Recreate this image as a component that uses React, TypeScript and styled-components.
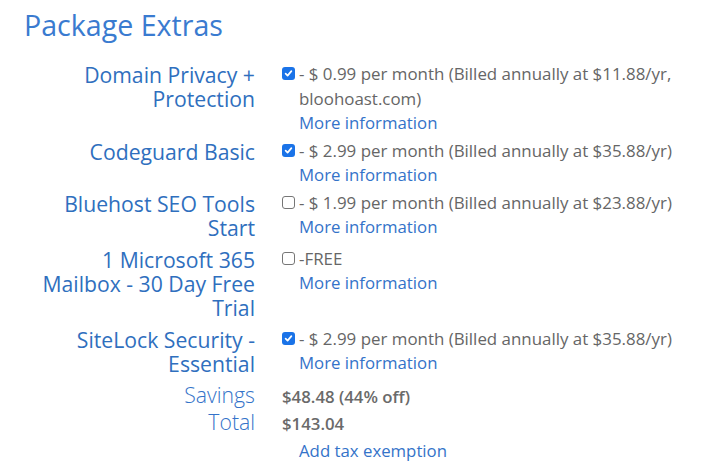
import styled, { createGlobalStyle } from 'styled-components';

const GlobalStyle = createGlobalStyle`
  html, body {
    margin: 0;
    padding: 0;
    background: #ffffff;
  }
  body {
    font-family: 'Open Sans', 'Noto Sans', sans-serif;
  }
`;

type Extra = {
  name: string;
  price: string;
  checked: boolean;
};

const extras: Extra[] = [
  {
    name: 'Domain Privacy + Protection',
    price: '- $ 0.99 per month (Billed annually at $11.88/yr, bloohoast.com)',
    checked: true,
  },
  {
    name: 'Codeguard Basic',
    price: '- $ 2.99 per month (Billed annually at $35.88/yr)',
    checked: true,
  },
  {
    name: 'Bluehost SEO Tools Start',
    price: '- $ 1.99 per month (Billed annually at $23.88/yr)',
    checked: false,
  },
  {
    name: '1 Microsoft 365 Mailbox - 30 Day Free Trial',
    price: '-FREE',
    checked: false,
  },
  {
    name: 'SiteLock Security - Essential',
    price: '- $ 2.99 per month (Billed annually at $35.88/yr)',
    checked: true,
  },
];

const Check = ({ checked }: { checked: boolean }) => (
  <Box $checked={checked}>
    {checked && (
      <svg width="9" height="9" viewBox="0 0 10 10">
        <path
          d="M1.8 5.2 L4 7.4 L8.2 2.4"
          fill="none"
          stroke="#fff"
          strokeWidth="1.9"
          strokeLinecap="round"
          strokeLinejoin="round"
        />
      </svg>
    )}
  </Box>
);

const App = () => {
  return (
    <Page>
      <GlobalStyle />
      <Title>Package Extras</Title>
      <Table>
        {extras.map((item) => (
          <Row key={item.name}>
            <Label>{item.name}</Label>
            <Value>
              <Check checked={item.checked} />
              <Details>
                <Price>{item.price}</Price>
                <Link>More information</Link>
              </Details>
            </Value>
          </Row>
        ))}
        <SummaryRow>
          <SummaryLabel>Savings</SummaryLabel>
          <Amount>$48.48 (44% off)</Amount>
        </SummaryRow>
        <SummaryRow>
          <SummaryLabel>Total</SummaryLabel>
          <Amount>$143.04</Amount>
        </SummaryRow>
        <SummaryRow>
          <span />
          <TaxLink>Add tax exemption</TaxLink>
        </SummaryRow>
      </Table>
    </Page>
  );
};

export default App;

const Page = styled.div`
  width: 715px;
  height: 471px;
  overflow: hidden;
  padding-top: 6px;
  box-sizing: border-box;
`;

const Title = styled.h1`
  margin: 0 0 0 24px;
  font-size: 28.6px;
  font-weight: 400;
  line-height: 38px;
  color: #3a7bd0;
`;

const Table = styled.div`
  display: flex;
  flex-direction: column;
  margin-top: 17px;
`;

const Row = styled.div`
  display: grid;
  grid-template-columns: 255px 420px;
  column-gap: 27px;
  align-items: start;
`;

const Label = styled.div`
  font-size: 21.2px;
  line-height: 24px;
  text-align: right;
  color: #2f6fbe;
  padding-left: 36px;
  padding-top: 2px;
  padding-bottom: 6px;
`;

const Value = styled.div`
  display: flex;
  align-items: flex-start;
  padding-bottom: 3px;
`;

const Box = styled.span<{ $checked: boolean }>`
  flex: none;
  width: 13px;
  height: 13px;
  box-sizing: border-box;
  margin-top: 6px;
  margin-right: 4px;
  border-radius: 3px;
  display: flex;
  align-items: center;
  justify-content: center;
  background: ${({ $checked }) => ($checked ? '#1a73e8' : '#ffffff')};
  border: ${({ $checked }) => ($checked ? 'none' : '1px solid #767676')};
`;

const Details = styled.div`
  display: flex;
  flex-direction: column;
`;

const Price = styled.div`
  font-size: 16.9px;
  line-height: 25px;
  color: #666666;
`;

const Link = styled.a`
  font-size: 16.8px;
  line-height: 24px;
  color: #3473c9;
  cursor: pointer;
`;

const SummaryRow = styled.div`
  display: grid;
  grid-template-columns: 255px 420px;
  column-gap: 27px;
  align-items: baseline;
  height: 27px;
`;

const SummaryLabel = styled.div`
  font-size: 21.2px;
  font-weight: 300;
  line-height: 26px;
  text-align: right;
  color: #3473c9;
`;

const Amount = styled.div`
  font-size: 16.8px;
  font-weight: 600;
  line-height: 26px;
  color: #6a6a6a;
`;

const TaxLink = styled.a`
  font-size: 16.8px;
  line-height: 30px;
  padding-left: 17px;
  color: #3473c9;
  cursor: pointer;
`;
